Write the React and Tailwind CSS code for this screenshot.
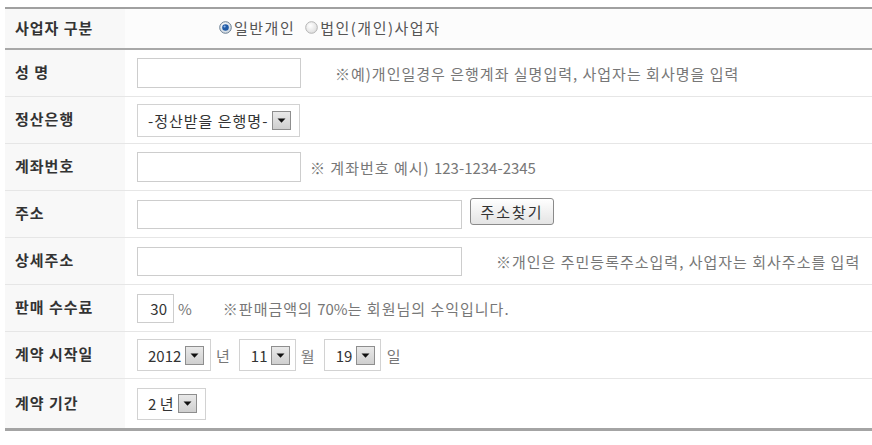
import React from 'react';

// 드롭다운 화살표 버튼 (구형 윈도우 select 모양)
const ArrowBox = ({ className = '' }) => (
    <span className={`w-[19px] h-[19px] shrink-0 flex items-center justify-center border border-[#8e8e8e] bg-gradient-to-b from-[#e9e9e9] to-[#cfcfcf] ${className}`}>
        <svg width="9" height="5" viewBox="0 0 9 5">
            <path d="M0.5 0.5 H8.5 L4.5 4.8 Z" fill="#111" />
        </svg>
    </span>
);

const FakeSelect = ({ text, className = '', textClass = '' }) => (
    <div className={`flex items-center border border-[#d2d2d2] bg-white text-[#333] ${className}`}>
        <span className={`whitespace-nowrap ${textClass}`}>{text}</span>
        <ArrowBox className="ml-[4px]" />
    </div>
);

const Radio = ({ checked }) => (
    <svg width="13" height="13" viewBox="0 0 13 13" className="shrink-0">
        <defs>
            <radialGradient id={checked ? 'rOn' : 'rOff'} cx="40%" cy="35%" r="70%">
                <stop offset="0%" stopColor="#ffffff" />
                <stop offset="100%" stopColor={checked ? '#c9d3dc' : '#dcdcdc'} />
            </radialGradient>
        </defs>
        <circle cx="6.5" cy="6.5" r="5.8" fill={`url(#${checked ? 'rOn' : 'rOff'})`} stroke={checked ? '#6b7f93' : '#b4b4b4'} strokeWidth="1" />
        {checked && <circle cx="6.5" cy="6.5" r="3.3" fill="#1f5aa6" />}
        {checked && <circle cx="5.6" cy="5.5" r="1.1" fill="#8fb4e3" />}
    </svg>
);

const Label = ({ children }) => (
    <div className="w-[120px] shrink-0 self-stretch bg-[#f8f8f8] pl-[10px] pb-[3px] flex items-center font-bold text-[#333] tracking-[1px]">
        {children}
    </div>
);

const Row = ({ label, children, className = 'h-[47px] border-b border-[#e6e6e6]' }) => (
    <div className={`flex ${className}`}>
        <Label>{label}</Label>
        <div className="flex items-center pl-[12px] bg-white flex-1">{children}</div>
    </div>
);

const Input = ({ className = '', value = '' }) => (
    <div className={`border border-[#cdcdcd] bg-white text-[#333] flex items-center ${className}`}>{value}</div>
);

const Note = ({ children, className = '' }) => (
    <span className={`text-[#777] whitespace-nowrap tracking-[1px] ${className}`}>{children}</span>
);

export default function App() {
    return (
        <div className="bg-white w-[872px] h-[445px] overflow-hidden pt-[7px] pl-[5px] text-[15px] leading-none" style={{ fontFamily: '"Noto Sans CJK KR", "Noto Sans", sans-serif' }}>
            <div className="w-[867px] border-t-2 border-[#a0a0a0] border-b-[3px] border-b-[#a4a4a4]">

                {/* 사업자 구분 */}
                <div className="flex h-[41px] border-b-2 border-[#a8a8a8]">
                    <div className="w-[120px] shrink-0 bg-[#f8f8f8] pl-[10px] pb-[2px] flex items-center font-bold text-[#333] tracking-[1px]">사업자 구분</div>
                    <div className="flex items-center pl-[94px] pb-[2px] flex-1 bg-[#fcfcfc] text-[#555] tracking-[1.5px]">
                        <Radio checked />
                        <span className="ml-[2px]">일반개인</span>
                        <span className="ml-[10px]"><Radio /></span>
                        <span className="ml-[2px]">법인(개인)사업자</span>
                    </div>
                </div>

                <Row label="성 명">
                    <Input className="w-[164px] h-[30px]" />
                    <Note className="ml-[34px]">※예)개인일경우 은행계좌 실명입력, 사업자는 회사명을 입력</Note>
                </Row>

                <Row label="정산은행">
                    <FakeSelect text="-정산받을 은행명-" textClass="tracking-[1px]" className="w-[163px] h-[33px] pl-[10px]" />
                </Row>

                <Row label="계좌번호">
                    <Input className="w-[164px] h-[30px]" />
                    <Note className="ml-[9px]">※ 계좌번호 예시) <span className="tracking-normal">123-1234-2345</span></Note>
                </Row>

                <Row label="주소">
                    <Input className="w-[325px] h-[29px]" />
                    <button className="ml-[8px] mb-[6px] w-[84px] h-[27px] rounded-[3px] border border-[#8a8a8a] bg-gradient-to-b from-[#ffffff] to-[#e4e4e4] text-[#333] text-[15px] tracking-[2px]">주소찾기</button>
                </Row>

                <Row label="상세주소">
                    <Input className="w-[325px] h-[29px]" />
                    <Note className="ml-[34px]">※개인은 주민등록주소입력, 사업자는 회사주소를 입력</Note>
                </Row>

                <Row label="판매 수수료">
                    <Input className="w-[37px] h-[29px] justify-end pr-[6px]" value="30" />
                    <Note className="ml-[4px]">%</Note>
                    <Note className="ml-[30px]">※판매금액의 <span className="tracking-normal">70%</span>는 회원님의 수익입니다.</Note>
                </Row>

                <Row label="계약 시작일">
                    <FakeSelect text="2012" className="w-[74px] h-[32px] pl-[10px]" />
                    <Note className="ml-[5px]">년</Note>
                    <FakeSelect text="11" className="ml-[8px] w-[57px] h-[32px] pl-[11px]" />
                    <Note className="ml-[5px]">월</Note>
                    <FakeSelect text="19" className="ml-[8px] w-[57px] h-[32px] pl-[11px]" />
                    <Note className="ml-[6px]">일</Note>
                </Row>

                <Row label="계약 기간" className="h-[49px]">
                    <FakeSelect text="2 년" className="w-[69px] h-[32px] pl-[10px]" />
                </Row>
            </div>
        </div>
    );
}
